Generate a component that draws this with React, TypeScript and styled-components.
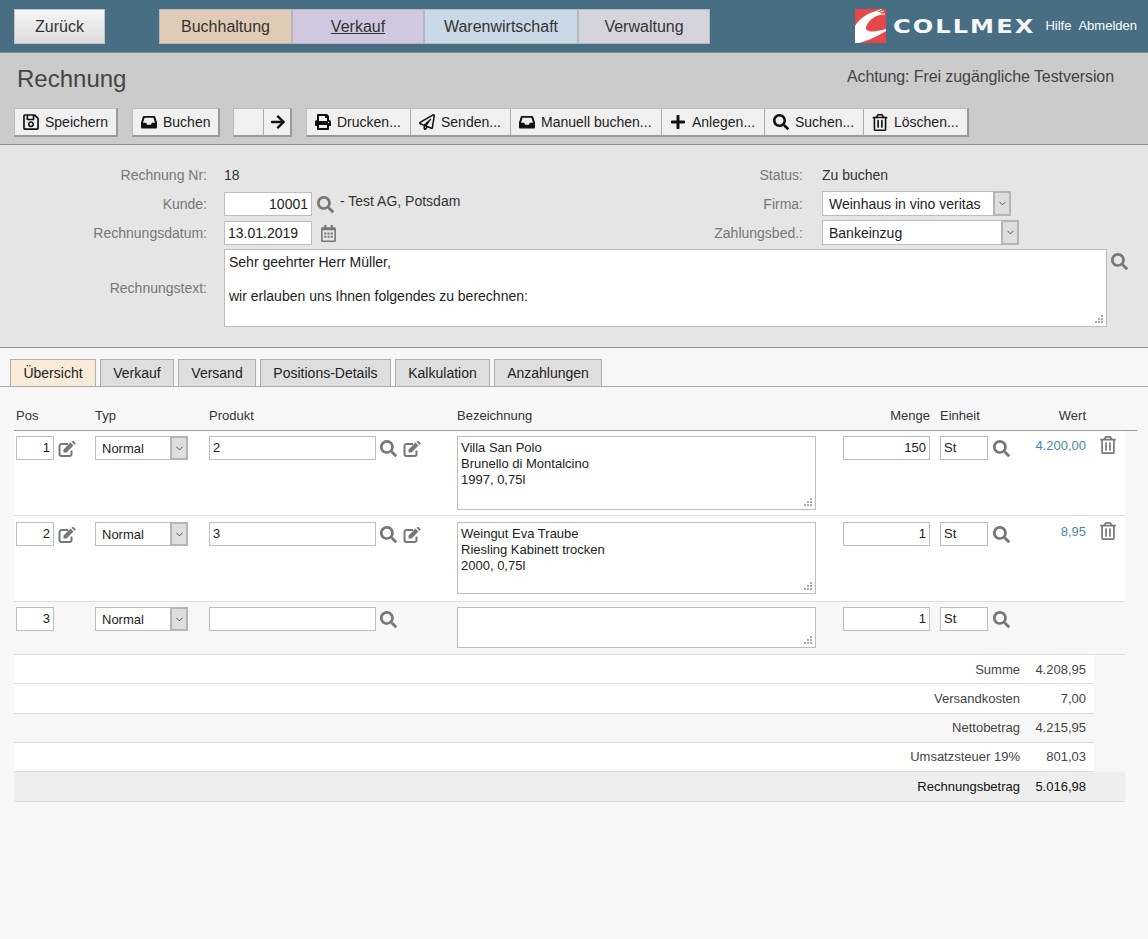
import React from 'react';
import styled, { createGlobalStyle } from 'styled-components';
import { FaRegSave, FaArrowRight, FaPrint, FaRegPaperPlane, FaPlus, FaSearch, FaRegTrashAlt, FaRegCalendarAlt } from 'react-icons/fa';
import { ChevronDown } from 'lucide-react';

const GlobalStyle = createGlobalStyle`
  html, body {
    margin: 0;
    background: #f7f7f7;
    font-family: "Liberation Sans", Arial, sans-serif;
    color: #333;
  }
  * { box-sizing: border-box; }
`;

const Page = styled.div`
  width: 1148px;
  height: 939px;
  overflow: hidden;
`;

const Header = styled.header`
  height: 53px;
  background: #486e84;
  border-bottom: 1px solid #7d8a92;
  display: flex;
  align-items: flex-start;
  padding: 9px 11px 0 14px;
`;

const BackButton = styled.button`
  width: 91px;
  height: 35px;
  font: 16px "Liberation Sans", Arial, sans-serif;
  color: #333;
  background: linear-gradient(#f6f6f6, #dcdcdc);
  border: 1px solid #c4c4c4;
  padding: 0;
`;

const Nav = styled.nav`
  display: flex;
  margin-left: 54px;
`;

const NavItem = styled.div<{ $bg: string; $w: number; $active?: boolean }>`
  width: ${({ $w }) => $w}px;
  height: 35px;
  background: ${({ $bg }) => $bg};
  border: 1px solid #b4b9bd;
  font-size: 16px;
  line-height: 34px;
  text-align: center;
  color: #333;
  text-decoration: ${({ $active }) => ($active ? 'underline' : 'none')};
`;

const Brand = styled.div`
  margin-left: auto;
  display: flex;
  align-items: center;
  height: 34px;
`;

const LogoBox = styled.div`
  width: 139px;
  margin: 0 5px 0 7px;
  overflow: visible;
`;

const LogoText = styled.span`
  display: inline-block;
  font-family: "DejaVu Sans", sans-serif;
  font-weight: 700;
  font-size: 19px;
  letter-spacing: 1.6px;
  color: #f4f6f7;
  white-space: nowrap;
  transform: scaleX(1.27);
  transform-origin: left center;
`;

const HeaderLink = styled.a`
  font-size: 13px;
  color: #fff;
  margin-left: 8px;
  margin-top: -1px;
  & + & { margin-left: 7px; }
`;

const TitleBand = styled.section`
  height: 92px;
  background: #cbcbcb;
  border-bottom: 1px solid #8e8e8e;
  padding: 0 13px 0 14px;
`;

const TitleRow = styled.div`
  display: flex;
  justify-content: space-between;
  height: 55px;
  padding: 12px 21px 0 3px;
`;

const Title = styled.h1`
  margin: 0;
  font-size: 24px;
  font-weight: 400;
  line-height: 28px;
  color: #444;
`;

const Notice = styled.div`
  font-size: 16px;
  line-height: 22px;
  margin-top: 1px;
  letter-spacing: -0.08px;
  color: #444;
`;

const Toolbar = styled.div`
  display: flex;
`;

const ButtonGroup = styled.div<{ $left?: number }>`
  display: flex;
  height: 29px;
  margin-left: ${({ $left }) => $left ?? 0}px;
  border-top: 1px solid #bcbcbc;
  border-left: 1px solid #bcbcbc;
  border-right: 2px solid #9a9a9a;
  border-bottom: 2px solid #9a9a9a;
  background: #f0f0f0;
`;

const ToolButton = styled.div<{ $w: number; $pad?: number }>`
  width: ${({ $w }) => $w}px;
  display: flex;
  align-items: center;
  gap: 6px;
  padding-left: ${({ $pad }) => $pad ?? 8}px;
  font-size: 14px;
  color: #222;
  white-space: nowrap;
  & + & { border-left: 1px solid #aaa; }
`;

const ToolIcon = styled.span<{ $size?: number }>`
  width: 16px;
  display: flex;
  flex: none;
  justify-content: center;
  color: #111;
  font-size: ${({ $size }) => $size ?? 16}px;
`;

const FormBand = styled.section`
  height: 203px;
  background: #e5e5e5;
  border-bottom: 1px solid #8e8e8e;
  padding-top: 18px;
  display: flex;
  flex-direction: column;
  gap: 5px;
`;

const FormRow = styled.div`
  display: grid;
  grid-template-columns: 224px 386px 212px 1fr;
  height: 24px;
  align-items: center;
  font-size: 14px;
`;

const TextRow = styled(FormRow)`
  grid-template-columns: 224px 883px 1fr;
  height: 78px;
  margin-top: -1px;
`;

const FieldLabel = styled.div<{ $gap?: number }>`
  text-align: right;
  padding-right: ${({ $gap }) => $gap ?? 17}px;
  color: #777;
`;

const FieldValue = styled.div`
  color: #333;
  display: flex;
  align-items: center;
`;

const SideIcon = styled(FieldValue)`
  align-self: start;
  padding-top: 4px;
`;

const Input = styled.input<{ $w: number; $right?: boolean; $small?: boolean }>`
  width: ${({ $w }) => $w}px;
  height: 24px;
  flex: none;
  border: 1px solid #bdbdbd;
  background: #fff;
  padding: 0 3px ${({ $small }) => ($small ? 1 : 0)}px;
  outline: none;
  font: ${({ $small }) => ($small ? '13px' : '14px')} "Liberation Sans", Arial, sans-serif;
  color: #222;
  text-align: ${({ $right }) => ($right ? 'right' : 'left')};
`;

const AreaWrap = styled.div`
  position: relative;
  &::after {
    content: '';
    position: absolute;
    right: 4px;
    bottom: 4px;
    width: 2px;
    height: 2px;
    background: #aaa;
    box-shadow: -3px 0 #aaa, -6px 0 #aaa, 0 -3px #aaa, -3px -3px #aaa, 0 -6px #aaa;
  }
`;

const Area = styled.textarea<{ $w: number; $h: number; $small?: boolean }>`
  width: ${({ $w }) => $w}px;
  height: ${({ $h }) => $h}px;
  display: block;
  resize: none;
  border: 1px solid #bdbdbd;
  background: #fff;
  padding: ${({ $small }) => ($small ? '3px 3px' : '4px')};
  margin: 0;
  outline: none;
  font: ${({ $small }) => ($small ? '13px/16px' : '14px/17px')} "Liberation Sans", Arial, sans-serif;
  color: #222;
  overflow: hidden;
`;

const SelectBox = styled.div<{ $w: number; $small?: boolean }>`
  width: ${({ $w }) => $w}px;
  height: ${({ $small }) => ($small ? 24 : 25)}px;
  margin-top: ${({ $small }) => ($small ? 0 : -1)}px;
  display: flex;
  flex: none;
  border: 1px solid #bdbdbd;
  background: #fff;
  font-size: ${({ $small }) => ($small ? 13 : 14)}px;
  line-height: ${({ $small }) => ($small ? 23 : 25)}px;
  color: #222;
`;

const SelectText = styled.div`
  flex: 1;
  padding-left: 6px;
  white-space: nowrap;
`;

const SelectArrow = styled.div`
  width: 18px;
  margin: -1px -1px -1px 0;
  background: #dedede;
  border: 2px solid #b5b5b5;
  display: flex;
  align-items: center;
  justify-content: center;
  color: #444;
`;

const IconSlot = styled.span<{ $size?: number; $left?: number }>`
  display: inline-flex;
  flex: none;
  color: #777;
  font-size: ${({ $size }) => $size ?? 17}px;
  margin-left: ${({ $left }) => $left ?? 4}px;
`;

const CustomerName = styled.span`
  margin: -6px 0 0 6px;
`;

const Tabs = styled.div`
  display: flex;
  gap: 4px;
  height: 39px;
  padding: 11px 0 0 10px;
  border-bottom: 1px solid #aaa;
`;

const Tab = styled.div<{ $active?: boolean; $w: number }>`
  width: ${({ $w }) => $w}px;
  height: 27px;
  font-size: 14px;
  line-height: 26px;
  text-align: center;
  color: #222;
  background: ${({ $active }) => ($active ? '#f8ecd9' : '#dedede')};
  border: 1px solid #b0b0b0;
  border-bottom: none;
`;

const Content = styled.div`
  padding: 0 0 0 14px;
`;

const gridColumns = '79px 114px 248px 386px 97px 80px 66px 1fr';

const HeadRow = styled.div`
  display: grid;
  grid-template-columns: ${gridColumns};
  width: 1123px;
  height: 44px;
  padding: 21px 0 0 2px;
  border-bottom: 1px solid #999;
  font-size: 13px;
  line-height: 16px;
  color: #333;
`;

const HeadCell = styled.div<{ $right?: boolean; $pad?: number }>`
  text-align: ${({ $right }) => ($right ? 'right' : 'left')};
  padding-right: ${({ $pad }) => $pad ?? 0}px;
`;

const ItemRow = styled.div<{ $white?: boolean; $top: number; $bottom: number }>`
  display: grid;
  grid-template-columns: ${gridColumns};
  align-items: start;
  width: 1111px;
  padding: ${({ $top, $bottom }) => `${$top}px 0 ${$bottom}px 2px`};
  background: ${({ $white }) => ($white ? '#fff' : 'transparent')};
  border-bottom: 1px solid #ddd;
  font-size: 13px;
`;

const Cell = styled.div`
  display: flex;
  align-items: center;
  svg { display: block; margin-top: 1px; }
`;

const ValueCell = styled(Cell)`
  justify-content: flex-end;
  color: #4a88a6;
  padding-top: 2px;
  line-height: 15px;
`;

const TrashCell = styled(Cell)`
  padding-left: 9px;
  svg { margin-top: 0; }
`;

const SummaryRow = styled.div<{ $tint?: boolean }>`
  display: grid;
  grid-template-columns: 1fr 66px;
  width: 1080px;
  height: 29.25px;
  padding-right: 8px;
  align-items: center;
  background: ${({ $tint }) => ($tint ? '#f7f7f7' : '#fff')};
  border-bottom: 1px solid #ddd;
  font-size: 13px;
  color: #444;
  text-align: right;
`;

const TotalRow = styled(SummaryRow)`
  width: 1111px;
  height: 30px;
  padding-right: 39px;
  background: #eee;
  color: #111;
`;

// font-awesome 4 style tray, the newer package version is too flat
const InboxIcon = () => (
  <svg width="16" height="14" viewBox="0 0 16 14">
    <path
      fillRule="evenodd"
      fill="currentColor"
      d="M3 1h10c.6 0 1 .3 1.2.8L16 7.5v4.7c0 .8-.6 1.3-1.3 1.3H1.3C.6 13.500 0 13 0 12.200V7.500L1.800 1.800C2 1.300 2.400 1 3 1zM3.600 2.800 2 7.800h3.200L6 9.700h4l.8-1.900H14l-1.600-5z"
    />
  </svg>
);

// font-awesome 4 pencil-square-o
const EditIcon = () => (
  <svg width="18" height="16" viewBox="0 0 18 16">
    <path
      d="M10 3H3.500A2 2 0 0 0 1.500 5v8a2 2 0 0 0 2 2h8a2 2 0 0 0 2-2V9.500"
      fill="none"
      stroke="currentColor"
      strokeWidth="2"
    />
    <path d="M5.500 8.500 12.500 1.500l3 3-7 7H5.500zM13.500.7 14.500 0a.8.8 0 0 1 1 0L17.500 2a.8.8 0 0 1 0 1L16.500 3.800z" fill="currentColor" />
  </svg>
);

// logo: red square with the white swoosh
const Logo = () => (
  <svg width="31" height="34" viewBox="0 0 31 34">
    <rect width="31" height="34" fill="#e44848" />
    <path d="M0 17C4 10 12 4 22 2L27 5C19 7 13 12 11 18C10 23 18 24 31 20V22C21 28 10 33 3 34H0Z" fill="#fff" />
    <path d="M18 4L27 0M20 5L29 2M21 6L30 5" stroke="#fff" strokeWidth="1" />
  </svg>
);

const SearchIcon = ({ left }: { left?: number }) => (
  <IconSlot $left={left}><FaSearch /></IconSlot>
);

const Edit = ({ left }: { left?: number }) => (
  <IconSlot $left={left}><EditIcon /></IconSlot>
);

const toolButtons = [
  { icon: <FaPrint />, label: 'Drucken...', w: 103 },
  { icon: <FaRegPaperPlane />, label: 'Senden...', w: 100 },
  { icon: <InboxIcon />, label: 'Manuell buchen...', w: 151 },
  { icon: <FaPlus />, label: 'Anlegen...', w: 103 },
  { icon: <FaSearch />, label: 'Suchen...', w: 99 },
  { icon: <FaRegTrashAlt />, label: 'Löschen...', w: 104, size: 17 },
];

const tabs = [
  { label: 'Übersicht', w: 86 },
  { label: 'Verkauf', w: 74 },
  { label: 'Versand', w: 78 },
  { label: 'Positions-Details', w: 131 },
  { label: 'Kalkulation', w: 95 },
  { label: 'Anzahlungen', w: 108 },
];

const items = [
  { pos: '1', product: '2', text: 'Villa San Polo\nBrunello di Montalcino\n1997, 0,75l', qty: '150', value: '4.200,00', h: 74, top: 5, bottom: 5, white: true },
  { pos: '2', product: '3', text: 'Weingut Eva Traube\nRiesling Kabinett trocken\n2000, 0,75l', qty: '1', value: '8,95', h: 72, top: 6, bottom: 7, white: true },
  { pos: '3', product: '', text: '', qty: '1', value: '', h: 41, top: 5, bottom: 6, white: false },
];

const summary = [
  { label: 'Summe', value: '4.208,95' },
  { label: 'Versandkosten', value: '7,00' },
  { label: 'Nettobetrag', value: '4.215,95', tint: true },
  { label: 'Umsatzsteuer 19%', value: '801,03' },
];

export default function App() {
  return (
    <Page>
      <GlobalStyle />
      <Header>
        <BackButton>Zurück</BackButton>
        <Nav>
          <NavItem $bg="#e0ccb6" $w={133}>Buchhaltung</NavItem>
          <NavItem $bg="#d1c8df" $w={132} $active>Verkauf</NavItem>
          <NavItem $bg="#c9d9e6" $w={154}>Warenwirtschaft</NavItem>
          <NavItem $bg="#d5d3dc" $w={132}>Verwaltung</NavItem>
        </Nav>
        <Brand>
          <Logo />
          <LogoBox><LogoText>COLLMEX</LogoText></LogoBox>
          <HeaderLink>Hilfe</HeaderLink>
          <HeaderLink>Abmelden</HeaderLink>
        </Brand>
      </Header>

      <TitleBand>
        <TitleRow>
          <Title>Rechnung</Title>
          <Notice>Achtung: Frei zugängliche Testversion</Notice>
        </TitleRow>
        <Toolbar>
          <ButtonGroup>
            <ToolButton $w={101} $pad={8}><ToolIcon $size={18}><FaRegSave /></ToolIcon>Speichern</ToolButton>
          </ButtonGroup>
          <ButtonGroup $left={14}>
            <ToolButton $w={85}><ToolIcon><InboxIcon /></ToolIcon>Buchen</ToolButton>
          </ButtonGroup>
          <ButtonGroup $left={13}>
            <ToolButton $w={29} />
            <ToolButton $w={27} $pad={6}><ToolIcon><FaArrowRight /></ToolIcon></ToolButton>
          </ButtonGroup>
          <ButtonGroup $left={14}>
            {toolButtons.map((b) => (
              <ToolButton key={b.label} $w={b.w}>
                <ToolIcon $size={b.size}>{b.icon}</ToolIcon>
                {b.label}
              </ToolButton>
            ))}
          </ButtonGroup>
        </Toolbar>
      </TitleBand>

      <FormBand>
        <FormRow>
          <FieldLabel>Rechnung Nr:</FieldLabel>
          <FieldValue>18</FieldValue>
          <FieldLabel $gap={19}>Status:</FieldLabel>
          <FieldValue>Zu buchen</FieldValue>
        </FormRow>
        <FormRow>
          <FieldLabel>Kunde:</FieldLabel>
          <FieldValue>
            <Input $w={88} $right readOnly value="10001" />
            <SearchIcon left={5} />
            <CustomerName>- Test AG, Potsdam</CustomerName>
          </FieldValue>
          <FieldLabel $gap={19}>Firma:</FieldLabel>
          <FieldValue>
            <SelectBox $w={189}>
              <SelectText>Weinhaus in vino veritas</SelectText>
              <SelectArrow><ChevronDown size={11} /></SelectArrow>
            </SelectBox>
          </FieldValue>
        </FormRow>
        <FormRow>
          <FieldLabel>Rechnungsdatum:</FieldLabel>
          <FieldValue>
            <Input $w={88} readOnly value="13.01.2019" />
            <IconSlot $left={8}><FaRegCalendarAlt /></IconSlot>
          </FieldValue>
          <FieldLabel $gap={19}>Zahlungsbed.:</FieldLabel>
          <FieldValue>
            <SelectBox $w={197}>
              <SelectText>Bankeinzug</SelectText>
              <SelectArrow><ChevronDown size={11} /></SelectArrow>
            </SelectBox>
          </FieldValue>
        </FormRow>
        <TextRow>
          <FieldLabel>Rechnungstext:</FieldLabel>
          <AreaWrap>
            <Area
              $w={883}
              $h={78}
              readOnly
              value={'Sehr geehrter Herr Müller,\n\nwir erlauben uns Ihnen folgendes zu berechnen:'}
            />
          </AreaWrap>
          <SideIcon><SearchIcon left={4} /></SideIcon>
        </TextRow>
      </FormBand>

      <Tabs>
        {tabs.map((t, i) => (
          <Tab key={t.label} $w={t.w} $active={i === 0}>{t.label}</Tab>
        ))}
      </Tabs>

      <Content>
        <HeadRow>
          <HeadCell>Pos</HeadCell>
          <HeadCell>Typ</HeadCell>
          <HeadCell>Produkt</HeadCell>
          <HeadCell>Bezeichnung</HeadCell>
          <HeadCell $right $pad={10}>Menge</HeadCell>
          <HeadCell>Einheit</HeadCell>
          <HeadCell $right>Wert</HeadCell>
          <HeadCell />
        </HeadRow>

        {items.map((item) => (
          <ItemRow key={item.pos} $white={item.white} $top={item.top} $bottom={item.bottom}>
            <Cell>
              <Input $w={38} $small $right readOnly value={item.pos} />
              {item.value && <Edit left={4} />}
            </Cell>
            <Cell>
              <SelectBox $w={93} $small>
                <SelectText>Normal</SelectText>
                <SelectArrow><ChevronDown size={11} /></SelectArrow>
              </SelectBox>
            </Cell>
            <Cell>
              <Input $w={167} $small readOnly value={item.product} />
              <SearchIcon left={4} />
              {item.value && <Edit left={6} />}
            </Cell>
            <Cell>
              <AreaWrap>
                <Area $w={359} $h={item.h} $small readOnly value={item.text} />
              </AreaWrap>
            </Cell>
            <Cell>
              <Input $w={87} $small $right readOnly value={item.qty} />
            </Cell>
            <Cell>
              <Input $w={48} $small readOnly value="St" />
              <SearchIcon left={5} />
            </Cell>
            <ValueCell>{item.value}</ValueCell>
            <TrashCell>
              {item.value && <IconSlot $left={4} $size={18}><FaRegTrashAlt /></IconSlot>}
            </TrashCell>
          </ItemRow>
        ))}

        {summary.map((s) => (
          <SummaryRow key={s.label} $tint={s.tint}>
            <span>{s.label}</span>
            <span>{s.value}</span>
          </SummaryRow>
        ))}
        <TotalRow>
          <span>Rechnungsbetrag</span>
          <span>5.016,98</span>
        </TotalRow>
      </Content>
    </Page>
  );
}
